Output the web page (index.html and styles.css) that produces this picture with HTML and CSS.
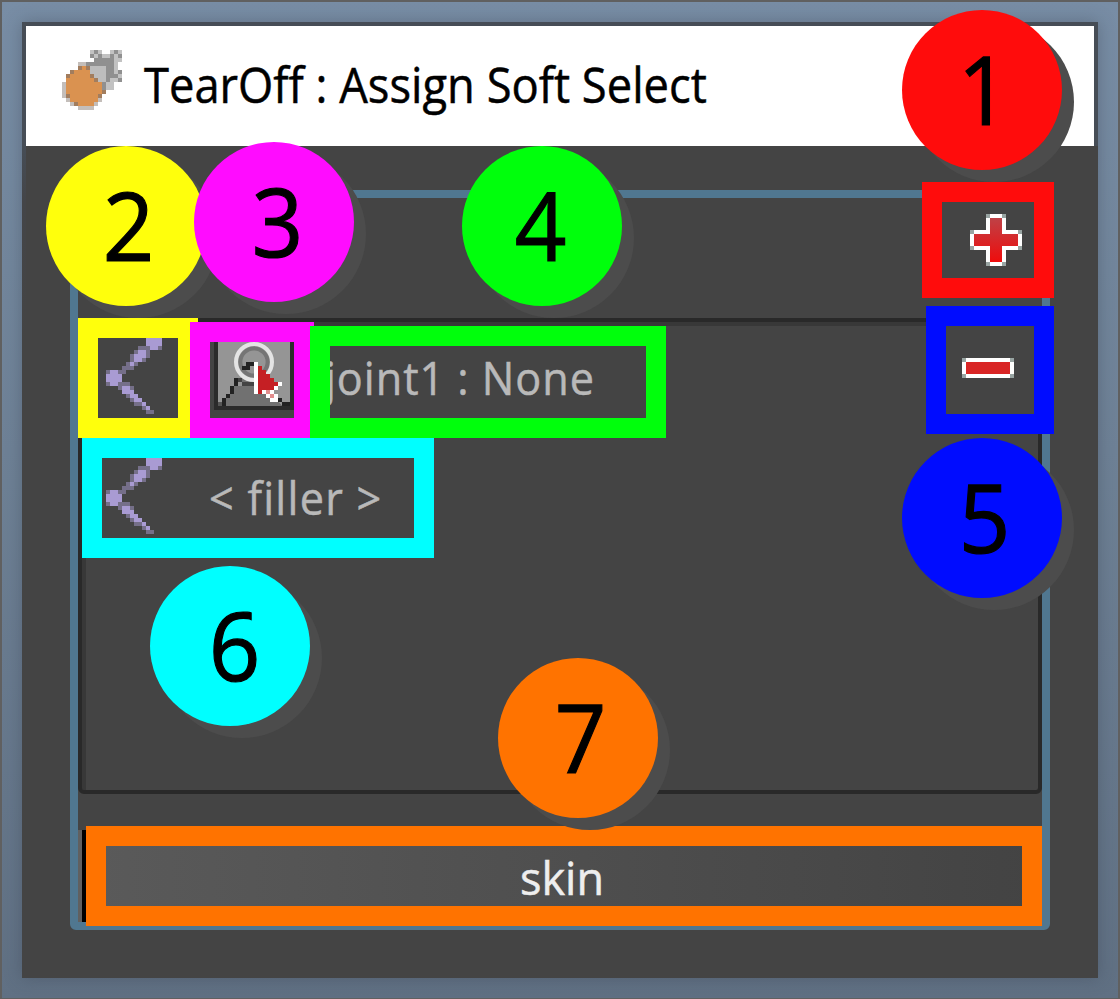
FILE: index.html
```html
<!DOCTYPE html>
<html lang="en">
<head>
<meta charset="utf-8">
<title>TearOff : Assign Soft Select</title>
<link rel="stylesheet" href="styles.css">
</head>
<body>
<svg class="defs" width="0" height="0" aria-hidden="true">
  <symbol id="joint" viewBox="0 0 20 20">
    <g fill="#a99bd3" shape-rendering="crispEdges">
      <path fill="#756f89" d="M12 0h4v3h-4zM10 2h2v1h1v2h-1v1h-2v1h-1v1h-2v1h-1v-2h1v-1h1v-2h1v-1h1zM2 8h4v4h-4zM6 11h2v1h1v2h1v1h1v1h1v1h1v1h1v1h-2v-1h-1v-1h-2v-1h-1v-1h-1v-1h-1v-1h-1v-1h1z"/>
      <path d="M13 0h2v3h-2zM12 0h4v2h-4zM10 3h2v2h-1v1h-2v1h-1v-1h1v-2h1zM3 8h2v4h-2zM2 9h4v2h-4zM6 12h2v1h1v1h1v1h1v1h1v1h1v1h-1v-1h-1v-1h-2v-1h-1v-1h-2z"/>
    </g>
  </symbol>
</svg>
<main class="desktop">
  <section class="window">
    <header class="titlebar">
      <svg class="app-icon" viewBox="0 0 15 15" shape-rendering="crispEdges">
        <path fill="#c2c2c2" d="M7 0h3v1h2v-1h3v3h-1v2h1v3h-2v2h-3v-4h-4v-3h2v-1h-1z"/>
        <path fill="#c4beba" d="M4 3h3v1h4v6h-1v3h-1v1h-1v1h-4v-1h-2v-1h-1v-1h-1v-4h1v-2h1v-1h2z"/>
        <path fill="#a27d5e" d="M4 4h3v1h1v1h1v1h1v1h1v3h-1v1h-1v1h-1v1h-5v-1h-1v-1h-1v-6h1v-1h2z"/>
        <path fill="#da9250" d="M5 4h1v1h1v2h1v1h2v3h-1v2h-1v1h-4v-1h-2v-2h-1v-4h1v-1h1v-1h2z"/>
        <path fill="#bdbdbd" d="M7 4h4v4h-2v-1h-1v-1h-1z"/>
        <path fill="#909090" d="M8 0h1v1h-1zM13 0h1v1h-1zM7 1h1v1h-1zM9 1h1v1h-1zM12 1h1v1h-1zM14 1h1v1h-1zM8 2h5v1h-5zM11 3h2v2h-2zM12 5h1v2h-1zM14 5h1v1h-1zM13 6h1v1h-1zM14 7h1v1h-1zM6 3h5v1h-5zM11 5h1v3h-1zM10 8h1v2h-1z"/>
      </svg>
      <h1 class="title"><span class="title-text">TearOff : Assign Soft Select</span></h1>
    </header>
    <div class="body">
      <div class="frame">
        <div class="toolbar">
          <svg class="icon-add" viewBox="0 0 13 13" shape-rendering="crispEdges">
            <path fill="#99a5a3" d="M4 0h5v4h4v5h-4v4h-5v-4h-4v-5h4z"/>
            <path fill="#fff" d="M5 0h3v1h1v3h3v1h1v3h-1v1h-3v3h-1v1h-3v-1h-1v-3h-3v-1h-1v-3h1v-1h3v-3h1z"/>
            <path fill="url(#red)" d="M5 1h3v4h4v3h-4v4h-3v-4h-4v-3h4z"/>
            <defs><linearGradient id="red" x1="0" y1="0" x2="0" y2="1"><stop offset="0" stop-color="#bf4146"/><stop offset="1" stop-color="#ef0c0c"/></linearGradient></defs>
          </svg>
        </div>
        <div class="list">
          <div class="row">
            <svg class="joint"><use href="#joint"/></svg>
            <svg class="select-icon" viewBox="0 0 21 20" shape-rendering="crispEdges">
              <path fill="#2b2b2b" d="M0 0h21v18h-21z"/>
              <path fill="#444" d="M0 0h1v18h20v2h-21z"/>
              <path fill="#959595" d="M2 0h18v17h-18z"/>
              <path fill="#717171" d="M8 10h3l7 7h-14v-2h1v-1h1v-2h2z"/>
              <path fill="#555" d="M2 0h1v1h-1zM19 0h1v1h-1zM2 16h1v1h-1z"/>
              <g fill="none" shape-rendering="auto">
                <circle cx="11" cy="6" r="3.4" stroke="#757575"/>
                <circle cx="11" cy="6" r="4.5" stroke="#e4e4e4"/>
              </g>
              <path fill="#222" d="M9 6h2v1h-2zM8 7h2v1h-2zM6 10h1v2h-1zM5 12h1v2h-1zM4 14h1v1h-1zM3 15h1v2h-1zM17 15h1v1h-1zM18 16h2v1h-2z"/>
              <path fill="#444" d="M7 10h1v1h-1zM8 11h3v1h-3z"/>
              <path fill="#fff" d="M11 6h1v1h1v1h1v1h1v1h1v1h2v1h-1v1h-1v1h1v2h-2v-1h-1v-1h-1v-1h-1v1h-1z"/>
              <path fill="#c51f24" d="M12 7h1v1h1v1h1v1h1v1h1v1h-1v1h-3v1h-1z"/>
              <path fill="#e28d8d" d="M14 13h1v1h1v1h-1v-1h-1z"/>
            </svg>
            <span class="label joint-label">joint1 : None</span>
            <svg class="icon-remove" viewBox="0 0 13 5" shape-rendering="crispEdges">
              <path fill="#99a5a3" d="M0 0h13v5h-13z"/>
              <path fill="#fff" d="M1 0h11v1h1v3h-1v1h-11v-1h-1v-3h1z"/>
              <path fill="#d92626" d="M1 1h11v3h-11z"/>
            </svg>
          </div>
          <div class="row">
            <svg class="joint"><use href="#joint"/></svg>
            <span class="label filler-label">&lt; filler &gt;</span>
          </div>
        </div>
        <button class="skin" type="button"><span class="skin-text">skin</span></button>
      </div>
    </div>
  </section>

  <div class="mark c2 box2"></div>
  <div class="mark c3 box3"></div>
  <div class="mark c4 box4"></div>
  <div class="mark c6 box6"></div>
  <div class="mark c1 box1"></div>
  <div class="mark c5 box5"></div>
  <div class="mark c7 box7"></div>
  <div class="badge b1"><span>1</span></div>
  <div class="badge b2"><span>2</span></div>
  <div class="badge b3"><span>3</span></div>
  <div class="badge b4"><span>4</span></div>
  <div class="badge b5"><span>5</span></div>
  <div class="badge b6"><span>6</span></div>
  <div class="badge b7"><span>7</span></div>
</main>
</body>
</html>
```
FILE: styles.css
```css
* { box-sizing: border-box; }
body { margin: 0; font-family: "Open Sans", "Noto Sans", sans-serif; }
.defs { position: absolute; }
svg { display: block; flex: none; }

.desktop {
  position: relative;
  width: 1120px;
  height: 999px;
  padding: 20px 20px 19px;
  border: 2px solid #606060;
  border-bottom-width: 1px;
  background: linear-gradient(180deg, #788da5 0%, #6e8196 45%, #607083 100%);
  overflow: hidden;
}
.window {
  width: 1076px;
  height: 956px;
  padding: 4px 4px 0;
  background: linear-gradient(180deg, #464d56 0, #464d56 124px, #444548 180px, #444 320px);
  box-shadow: 0 0 16px rgba(50, 58, 70, .35);
}
.titlebar {
  display: flex;
  align-items: center;
  height: 120px;
  padding-left: 36px;
  gap: 22px;
  background: #fff;
}
.app-icon { width: 60px; height: 60px; margin-top: -12px; }
.title { margin: -4px 0 0; font-size: 50px; line-height: 60px; font-weight: 400; color: #000; }
.title-text {
  display: inline-block;
  white-space: nowrap;
  transform: scaleX(.906);
  transform-origin: 0 50%;
  -webkit-text-stroke: .5px;
}

.body { height: 832px; margin-right: -4px; padding: 44px 48px 48px 44px; background: #444; }
.frame { width: 980px; height: 740px; border: 8px solid #507790; border-radius: 6px; }
.toolbar { display: flex; justify-content: flex-end; height: 120px; padding: 16px 20px 0 0; }
.icon-add { width: 52px; height: 52px; }
.list {
  height: 476px;
  border: 4px solid #292929;
  border-radius: 6px;
  box-shadow: inset 4px 4px 0 #383838;
}
.row { display: flex; height: 120px; padding: 16px 0 0 16px; }
.joint { width: 80px; height: 80px; }
.select-icon { width: 84px; height: 80px; margin-left: 32px; }
.label {
  line-height: 60px;
  font-size: 45px;
  color: #b9b9b9;
  letter-spacing: 1px;
  white-space: nowrap;
  transform: scaleX(.96);
  transform-origin: 0 50%;
  -webkit-text-stroke: .5px;
}
.joint-label { width: 295px; margin: 10px 0 0 31px; }
.filler-label { margin: 10px 0 0 31px; letter-spacing: 1.3px; }
.icon-remove { width: 52px; height: 20px; margin: 20px 24px 0 auto; }
.skin {
  display: flex;
  align-items: center;
  justify-content: center;
  width: 964px;
  height: 92px;
  margin: 36px 0 0;
  padding: 4px 0 0;
  border: 0;
  border-left: 4px solid #606060;
  background: linear-gradient(90deg, #000 4px, #5a5a5a 4px, #434343 100%);
  box-shadow: inset 0 -4px #000;
  color: #eee;
  font: 400 45px/60px "Open Sans", "Noto Sans", sans-serif;
}
.skin-text { display: inline-block; transform: scaleX(1); -webkit-text-stroke: .5px; }

/* Annotation overlay: outlined regions and numbered callouts */
.mark { position: absolute; border: 20px solid; }
.c1 { color: #ff0c0c; }
.c2 { color: #ffff0c; }
.c3 { color: #ff0cff; }
.c4 { color: #00ff0c; }
.c5 { color: #000cff; }
.c6 { color: #00ffff; }
.c7 { color: #ff7300; }
.box1 { left: 920px; top: 180px; width: 132px; height: 116px; }
.box2 { left: 76px; top: 316px; width: 120px; height: 120px; }
.box3 { left: 188px; top: 320px; width: 124px; height: 116px; }
.box4 { left: 308px; top: 324px; width: 356px; height: 112px; }
.box5 { left: 924px; top: 304px; width: 128px; height: 128px; }
.box6 { left: 80px; top: 436px; width: 352px; height: 120px; }
.box7 { left: 84px; top: 824px; width: 956px; height: 100px; }
.badge {
  position: absolute;
  display: flex;
  justify-content: center;
  width: 160px;
  height: 160px;
  padding-left: 5px;
  border-radius: 50%;
  box-shadow: 12px 12px 0 #4c4c4c;
  color: #000;
  font-size: 96px;
  line-height: 156px;
}
.badge span { transform: scaleX(.94); -webkit-text-stroke: 1.2px; }
.b1 { left: 900px; top: 8px; background: #ff0c0c; padding-left: 2px; }
.b2 { left: 44px; top: 144px; background: #ffff0c; }
.b3 { left: 192px; top: 140px; background: #ff0cff; padding-left: 7px; }
.b4 { left: 460px; top: 144px; background: #00ff0c; padding: 0 3px 0 0; }
.b5 { left: 900px; top: 436px; background: #000cff; }
.b6 { left: 148px; top: 564px; background: #00ffff; padding-left: 9px; }
.b7 { left: 496px; top: 656px; background: #ff7300; }
```
